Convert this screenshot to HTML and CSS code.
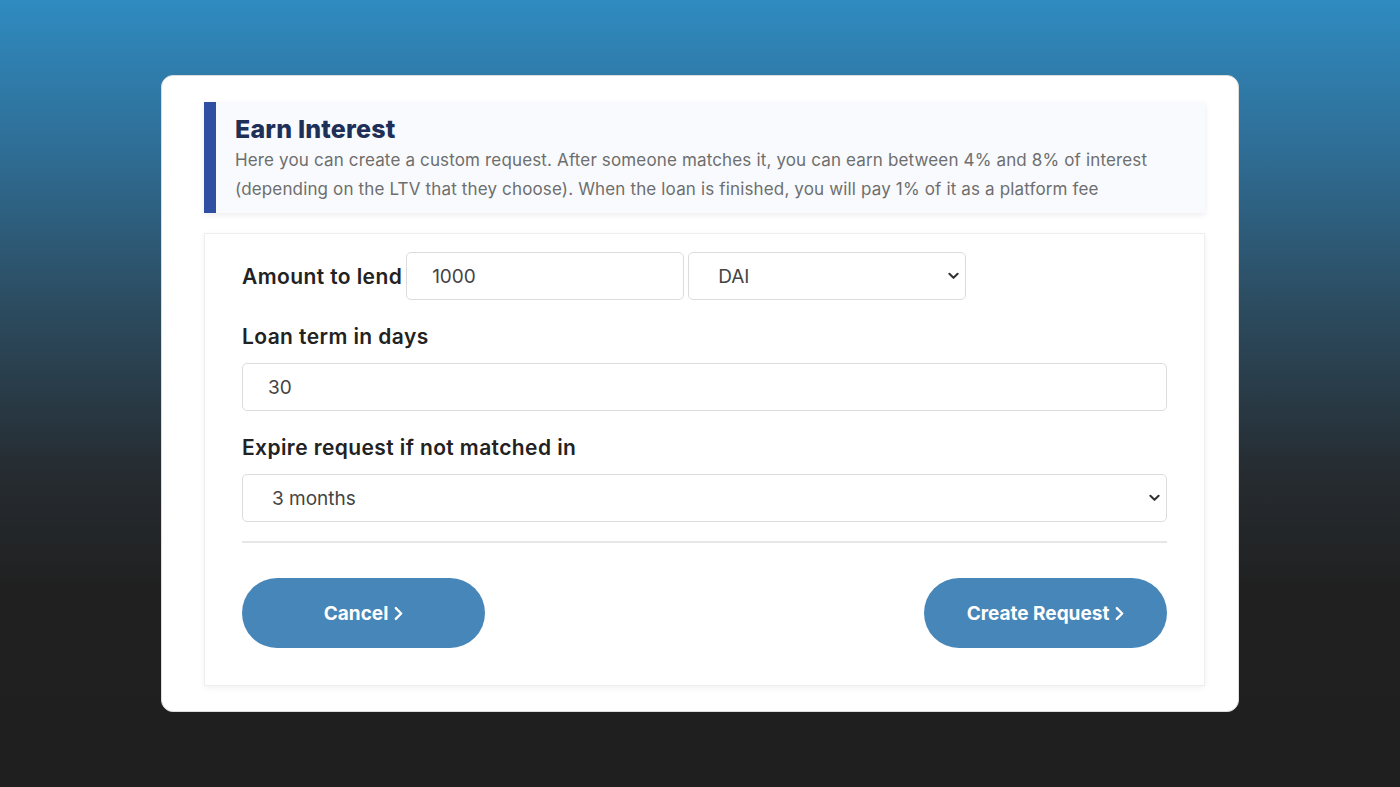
FILE: index.html
```html
<!DOCTYPE html>
<html lang="en">
<head>
<meta charset="utf-8">
<title>Earn Interest</title>
<link rel="stylesheet" href="styles.css">
</head>
<body>
<div class="card">
  <div class="intro">
    <h1 class="intro-title">Earn Interest</h1>
    <p class="intro-text">Here you can create a custom request. After someone matches it, you can earn between 4% and 8% of interest (depending on the LTV that they choose). When the loan is finished, you will pay 1% of it as a platform fee</p>
  </div>
  <form class="form-panel">
    <div class="row-inline">
      <label class="label">Amount to lend</label>
      <input class="field field-amount" type="text" value="1000">
      <select class="field select select-token">
        <option>DAI</option>
      </select>
    </div>
    <label class="label label-block">Loan term in days</label>
    <input class="field field-wide" type="text" value="30">
    <label class="label label-block">Expire request if not matched in</label>
    <select class="field select field-wide">
      <option>3 months</option>
    </select>
    <hr class="divider">
    <div class="actions">
      <button type="button" class="btn">Cancel <svg class="chev" viewBox="0 0 10 16" width="10" height="16"><path d="M2 2 L8 8 L2 14" fill="none" stroke="#fff" stroke-width="2.6" stroke-linecap="round" stroke-linejoin="round"/></svg></button>
      <button type="button" class="btn">Create Request <svg class="chev" viewBox="0 0 10 16" width="10" height="16"><path d="M2 2 L8 8 L2 14" fill="none" stroke="#fff" stroke-width="2.6" stroke-linecap="round" stroke-linejoin="round"/></svg></button>
    </div>
  </form>
</div>
</body>
</html>
```
FILE: styles.css
```css
html, body {
  margin: 0;
  padding: 0;
}
body {
  width: 1400px;
  height: 787px;
  overflow: hidden;
  background: linear-gradient(to bottom, #2f8bc0 0%, #2f6f98 18%, #2c4d62 38%, #262c31 60%, #202020 75%, #1f1f1f 100%);
  font-family: Inter, "Noto Sans", sans-serif;
}
.card {
  box-sizing: border-box;
  width: 1078px;
  height: 637px;
  margin: 75px 0 0 161px;
  background: #fff;
  border: 1px solid #dcdcdc;
  border-radius: 12px;
  padding: 26px 33px 25px 42px;
  display: flex;
  flex-direction: column;
  gap: 20px;
}
.intro {
  box-sizing: border-box;
  height: 111px;
  background: #f8fafd;
  border-left: 12px solid #2f50a2;
  box-shadow: 0 2px 6px rgba(0, 0, 0, 0.08);
  padding: 12px 20px 0 19px;
}
.intro-title {
  margin: 0;
  font-size: 25px;
  line-height: 30px;
  font-weight: 800;
  color: #1f3058;
  letter-spacing: 0.2px;
}
.intro-text {
  margin: 2px 0 0;
  font-size: 17px;
  line-height: 29px;
  color: #6e6e6e;
  letter-spacing: 0.15px;
}
.form-panel {
  box-sizing: border-box;
  height: 453px;
  border: 1px solid #eceef2;
  box-shadow: 0 2px 6px rgba(0, 0, 0, 0.06);
  padding: 18px 37px 0 37px;
  display: flex;
  flex-direction: column;
}
.row-inline {
  display: flex;
  align-items: center;
  gap: 4px;
}
.label {
  font-size: 21px;
  font-weight: 600;
  color: #222;
  letter-spacing: 0.4px;
}
.label-block {
  display: block;
  margin: 24px 0 13px;
  line-height: 26px;
}
.field {
  box-sizing: border-box;
  height: 48px;
  border: 1px solid #dcdcdc;
  border-radius: 5px;
  background: #fff;
  font-family: Inter, "Noto Sans", sans-serif;
  font-size: 19px;
  color: #444;
  padding: 0 0 0 25px;
  outline: none;
}
.field-amount {
  width: 278px;
}
.select {
  appearance: none;
  -webkit-appearance: none;
  padding-left: 29px;
  background-image: url("data:image/svg+xml;utf8,<svg xmlns='http://www.w3.org/2000/svg' width='12' height='8' viewBox='0 0 12 8'><path d='M1.5 1.5 L6 6 L10.5 1.5' fill='none' stroke='%23333' stroke-width='2.2' stroke-linecap='round' stroke-linejoin='round'/></svg>");
  background-repeat: no-repeat;
  background-position: right 6px center;
  background-size: 11px 8px;
}
.select-token {
  width: 278px;
}
.field-wide {
  width: 100%;
}
.divider {
  margin: 19px 0 0;
  border: 0;
  border-top: 2px solid #e6e6e6;
}
.actions {
  margin-top: 35px;
  display: flex;
  justify-content: space-between;
}
.btn {
  width: 243px;
  height: 70px;
  border: 0;
  border-radius: 35px;
  background: #4686b8;
  color: #fff;
  font-family: Inter, "Noto Sans", sans-serif;
  font-size: 19px;
  font-weight: 700;
  letter-spacing: 0;
  display: flex;
  align-items: center;
  justify-content: center;
  gap: 6px;
  cursor: pointer;
}
.chev {
  display: block;
  width: 9px;
  height: 15px;
}
```
